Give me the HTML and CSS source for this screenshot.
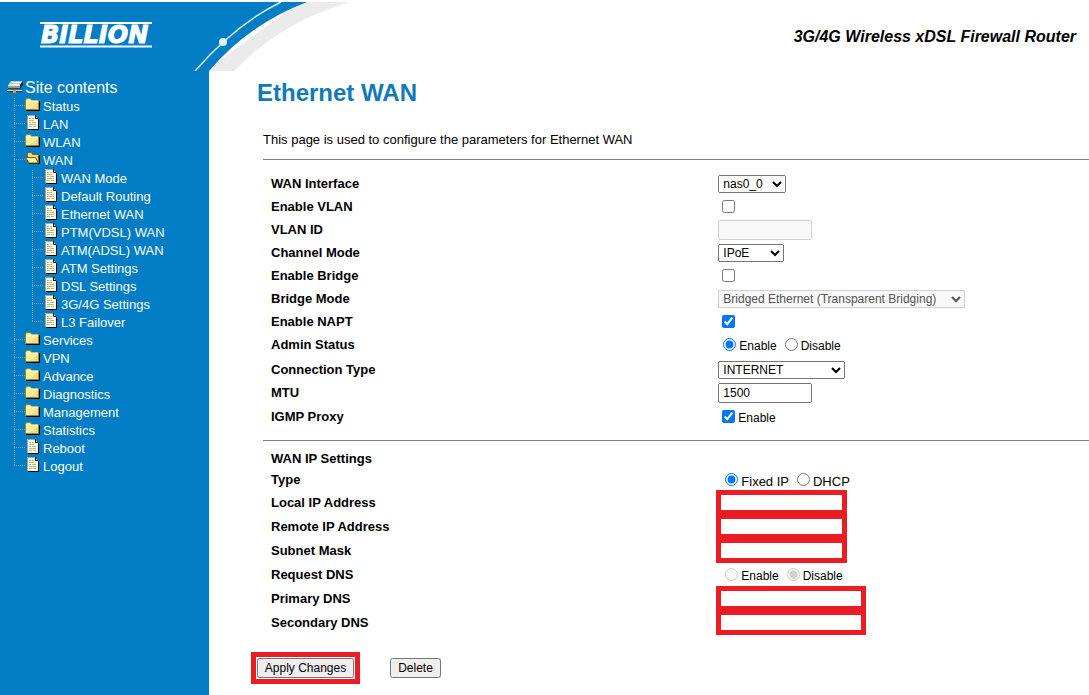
FILE: index.html
```html
<!DOCTYPE html>
<html lang="en">
<head>
  <meta charset="UTF-8">
  <meta name="viewport" content="width=device-width, initial-scale=1.0">
  <title>3G/4G Wireless xDSL Firewall Router</title>
  <link rel="stylesheet" href="styles.css">
</head>
<body>
  <!-- icon sprites -->
  <svg width="0" height="0" class="sprites" aria-hidden="true">
    <symbol id="icon-root" viewBox="0 0 18 18">
      <path d="M4 3h12l-3 4H1z" fill="#c8c8c8"/>
      <path d="M5 4.500h9M3 6.500h9" stroke="#f4f4f4"/>
      <path d="M1 7h12v4H1z" fill="#9a9a9a"/>
      <path d="M1 7.500h12" stroke="#e8e8e8"/>
      <path d="M13 7l3-4v4l-3 4z" fill="#222"/>
      <path d="M1 10.500h12" stroke="#444"/>
      <path d="M2 9h3" stroke="#5c5"/>
      <path d="M0 12.500h15" stroke="#ddd"/>
      <path d="M0 13.500h15" stroke="#333"/>
      <path d="M6 12h3v3H6z" fill="#f90"/>
    </symbol>
    <symbol id="icon-folder" viewBox="1 1 18 18">
      <path d="M2 13h13V5h1v10H2z" fill="#000"/>
      <path d="M1.500 4.500l1-2h4l1 2h7v9h-13z" fill="#fbee9c" stroke="#8f8a30"/>
      <path d="M2 5h12" stroke="#fffbd0"/>
      <path d="M6 13h8V6z" fill="#f5d98c"/>
    </symbol>
    <symbol id="icon-folder-open" viewBox="1 1 18 18">
      <path d="M3.500 3.500l1-1h3l1 2h6v9h-11z" fill="#f3d97c" stroke="#6b6420"/>
      <path d="M15 5h1v9H5v-1h10z" fill="#000"/>
      <path d="M1.500 7.500h10l3 5.500H5z" fill="#fff3a0" stroke="#6b6420"/>
    </symbol>
    <symbol id="icon-page" viewBox="0 1 18 18">
      <path d="M3 15h10V5h1v11H3z" fill="#000"/>
      <path d="M2 1h8l3 4v10H2z" fill="#fffde0"/>
      <path d="M2.500 15V1.500H10" fill="none" stroke="#a8a890"/>
      <path d="M10.500 1v3.500H13" fill="none" stroke="#000"/>
      <path d="M4 4.500h2M7 4.500h2M4 6.500h5M4 8.500h2M7 8.500h4M4 10.500h7M4 12.500h3M8 12.500h3" stroke="#b9b99c"/>
    </symbol>
  </svg>

  <header class="header">
    <svg class="banner" width="350" height="69" viewBox="0 0 350 69" role="img" aria-label="Billion">
      <path d="M300 0H350Q281 20 234 69H205z" fill="#ebebeb"/>
      <path d="M0 0H307Q249 22 209 69H0z" fill="#007dc5"/>
      <path d="M281 0Q236 22 195 69" fill="none" stroke="#d8f1fb" stroke-width="1.500"/>
      <circle cx="223" cy="40" r="4" fill="#e4f4fb"/>
      <path d="M40 21h112M40 44.500h112" stroke="#fff" stroke-width="2"/>
      <text x="41" y="41" class="logo-text">BILLION</text>
    </svg>
    <div class="product">3G/4G Wireless xDSL Firewall Router</div>
  </header>

  <div class="wrapper">
    <nav class="sidebar">
      <div class="root"><svg class="icon"><use href="#icon-root"/></svg>Site contents</div>
      <ul class="tree">
        <li><a href="#"><svg class="icon"><use href="#icon-folder"/></svg>Status</a></li>
        <li><a href="#"><svg class="icon"><use href="#icon-page"/></svg>LAN</a></li>
        <li><a href="#"><svg class="icon"><use href="#icon-folder"/></svg>WLAN</a></li>
        <li><a href="#"><svg class="icon"><use href="#icon-folder-open"/></svg>WAN</a>
          <ul class="tree">
            <li><a href="#"><svg class="icon"><use href="#icon-page"/></svg>WAN Mode</a></li>
            <li><a href="#"><svg class="icon"><use href="#icon-page"/></svg>Default Routing</a></li>
            <li><a href="#"><svg class="icon"><use href="#icon-page"/></svg>Ethernet WAN</a></li>
            <li><a href="#"><svg class="icon"><use href="#icon-page"/></svg>PTM(VDSL) WAN</a></li>
            <li><a href="#"><svg class="icon"><use href="#icon-page"/></svg>ATM(ADSL) WAN</a></li>
            <li><a href="#"><svg class="icon"><use href="#icon-page"/></svg>ATM Settings</a></li>
            <li><a href="#"><svg class="icon"><use href="#icon-page"/></svg>DSL Settings</a></li>
            <li><a href="#"><svg class="icon"><use href="#icon-page"/></svg>3G/4G Settings</a></li>
            <li><a href="#"><svg class="icon"><use href="#icon-page"/></svg>L3 Failover</a></li>
          </ul>
        </li>
        <li><a href="#"><svg class="icon"><use href="#icon-folder"/></svg>Services</a></li>
        <li><a href="#"><svg class="icon"><use href="#icon-folder"/></svg>VPN</a></li>
        <li><a href="#"><svg class="icon"><use href="#icon-folder"/></svg>Advance</a></li>
        <li><a href="#"><svg class="icon"><use href="#icon-folder"/></svg>Diagnostics</a></li>
        <li><a href="#"><svg class="icon"><use href="#icon-folder"/></svg>Management</a></li>
        <li><a href="#"><svg class="icon"><use href="#icon-folder"/></svg>Statistics</a></li>
        <li><a href="#"><svg class="icon"><use href="#icon-page"/></svg>Reboot</a></li>
        <li><a href="#"><svg class="icon"><use href="#icon-page"/></svg>Logout</a></li>
      </ul>
    </nav>

    <main class="main">
      <h1>Ethernet WAN</h1>
      <form>
        <p class="intro">This page is used to configure the parameters for Ethernet WAN</p>

        <div class="section">
          <div class="row">
            <label class="name" for="wanif">WAN Interface</label>
            <div class="field"><select id="wanif" class="w-if"><option>nas0_0</option></select></div>
          </div>
          <div class="row">
            <label class="name" for="vlan">Enable VLAN</label>
            <div class="field"><input type="checkbox" id="vlan"></div>
          </div>
          <div class="row">
            <label class="name" for="vid">VLAN ID</label>
            <div class="field"><input type="text" id="vid" disabled></div>
          </div>
          <div class="row">
            <label class="name" for="mode">Channel Mode</label>
            <div class="field"><select id="mode" class="w-mode"><option>IPoE</option></select></div>
          </div>
          <div class="row">
            <label class="name" for="bridge">Enable Bridge</label>
            <div class="field"><input type="checkbox" id="bridge"></div>
          </div>
          <div class="row">
            <label class="name" for="brmode">Bridge Mode</label>
            <div class="field"><select id="brmode" class="w-bridge" disabled><option>Bridged Ethernet (Transparent Bridging)</option></select></div>
          </div>
          <div class="row">
            <label class="name" for="napt">Enable NAPT</label>
            <div class="field"><input type="checkbox" id="napt" checked></div>
          </div>
          <div class="row row-tall">
            <span class="name">Admin Status</span>
            <div class="field">
              <input type="radio" name="admin" id="admin-on" checked><label for="admin-on">Enable</label>
              <input type="radio" name="admin" id="admin-off"><label for="admin-off">Disable</label>
            </div>
          </div>
          <div class="row">
            <label class="name" for="ctype">Connection Type</label>
            <div class="field"><select id="ctype" class="w-ctype"><option>INTERNET</option></select></div>
          </div>
          <div class="row">
            <label class="name" for="mtu">MTU</label>
            <div class="field"><input type="text" id="mtu" value="1500"></div>
          </div>
          <div class="row row-last">
            <span class="name">IGMP Proxy</span>
            <div class="field"><input type="checkbox" id="igmp" checked><label for="igmp">Enable</label></div>
          </div>
        </div>

        <div class="section section-ip">
          <div class="row"><span class="name">WAN IP Settings</span></div>
          <div class="row">
            <span class="name">Type</span>
            <div class="field indent ip-type">
              <input type="radio" name="iptype" id="fixed" checked><label for="fixed">Fixed IP</label>
              <input type="radio" name="iptype" id="dhcp"><label for="dhcp">DHCP</label>
            </div>
          </div>
          <div class="row">
            <label class="name" for="ip">Local IP Address</label>
            <div class="field"><input type="text" id="ip" class="marked"></div>
          </div>
          <div class="row">
            <label class="name" for="remote">Remote IP Address</label>
            <div class="field"><input type="text" id="remote" class="marked"></div>
          </div>
          <div class="row">
            <label class="name" for="mask">Subnet Mask</label>
            <div class="field"><input type="text" id="mask" class="marked"></div>
          </div>
          <div class="row">
            <span class="name">Request DNS</span>
            <div class="field indent">
              <input type="radio" name="dns" id="dns-on" disabled><label for="dns-on">Enable</label>
              <input type="radio" name="dns" id="dns-off" disabled checked><label for="dns-off">Disable</label>
            </div>
          </div>
          <div class="row">
            <label class="name" for="dns1">Primary DNS</label>
            <div class="field"><input type="text" id="dns1" class="marked marked-wide"></div>
          </div>
          <div class="row">
            <label class="name" for="dns2">Secondary DNS</label>
            <div class="field"><input type="text" id="dns2" class="marked marked-wide"></div>
          </div>
        </div>

        <div class="buttons">
          <span class="mark"><button type="button" class="btn-apply">Apply Changes</button></span>
          <button type="button" class="btn-delete">Delete</button>
        </div>
      </form>
    </main>
  </div>
</body>
</html>
```
FILE: styles.css
```css
* {
  margin: 0;
  padding: 0;
  box-sizing: border-box;
}
body {
  display: flex;
  flex-direction: column;
  min-height: 100vh;
  padding-top: 2px;
  background: #fff;
  color: #000;
  font-family: Arial, "Liberation Sans", sans-serif;
  font-size: 13px;
}
.sprites {
  position: absolute;
}

/* header */
.header {
  display: flex;
  justify-content: space-between;
  align-items: center;
  padding-right: 13px;
}
.banner {
  display: block;
}
.logo-text {
  font: italic bold 24px "DejaVu Sans", sans-serif;
  fill: #fff;
  stroke: #fff;
  stroke-width: 1px;
}
.product {
  font-size: 16px;
  font-weight: bold;
  font-style: italic;
}

.wrapper {
  display: flex;
  flex: 1;
}

/* sidebar tree */
.sidebar {
  width: 209px;
  flex-shrink: 0;
  padding: 8px 0 0 7px;
  background: #007dc5;
  color: #fff;
}
.root {
  display: flex;
  height: 19px;
  line-height: 18px;
  font-size: 16px;
}
.icon {
  width: 18px;
  height: 18px;
  margin-top: -1px;
  flex-shrink: 0;
}
.tree {
  list-style: none;
  padding-left: 7px;
}
.tree li {
  padding-left: 11px;
  background-image:
    repeating-linear-gradient(to bottom, #7d9fb5 0 1px, transparent 1px 2px),
    repeating-linear-gradient(to right, #7d9fb5 0 1px, transparent 1px 2px);
  background-repeat: no-repeat;
  background-size: 1px 100%, 11px 1px;
  background-position: 0 0, 0 7px;
}
.tree li:last-child {
  background-size: 1px 8px, 11px 1px;
}
.tree a {
  display: flex;
  height: 18px;
  line-height: 18px;
  color: #fff;
  text-decoration: none;
}

/* content */
.main {
  flex: 1;
  padding: 8px 0 12px 42px;
}
h1 {
  margin-left: 6px;
  font-size: 24px;
  line-height: 28px;
  color: #0f7abb;
}
.intro {
  margin: 24px 0 0 12px;
  line-height: 18px;
}
.section {
  margin: 10px 0 0 12px;
  padding: 12px 0;
  border-top: 1px solid #808080;
}
.section-ip {
  margin-top: 0;
  padding-top: 7px;
}
.row {
  display: flex;
  align-items: center;
  height: 23px;
}
.row-tall {
  height: 25px;
  padding-bottom: 3px;
}
.row-last {
  height: 24px;
}
.section-ip .row {
  height: 24px;
}
.section-ip .row:nth-child(-n+2) {
  height: 21px;
}
.name {
  width: 55%;
  padding-left: 8px;
  font-weight: bold;
}
.field {
  display: flex;
  align-items: center;
  padding-left: 1px;
  font-size: 12px;
}
.indent {
  padding-left: 3px;
}
.ip-type {
  font-size: 13px;
}
.field label {
  padding-top: 4px;
  margin-right: 8px;
}
input[type="checkbox"] {
  width: 13px;
  height: 13px;
  margin: 0 3px 0 4px;
}
input[type="radio"] {
  width: 13px;
  height: 13px;
  margin: 0 3px 0 5px;
}
label + input[type="radio"] {
  margin-left: 0;
}
select,
input[type="text"],
button {
  font-family: inherit;
  font-size: 12px;
}
select {
  height: 18px;
}
select:disabled {
  opacity: 1;
  color: #545454;
  border-color: #d0d0d0;
  background-color: #f8f8f8;
}
input[type="text"] {
  width: 94px;
  height: 20px;
  padding: 1px 3px;
}
.w-if {
  width: 68px;
}
.w-mode {
  width: 66px;
}
.w-bridge {
  width: 247px;
}
.w-ctype {
  width: 127px;
}
.field .marked {
  width: 131px;
  height: 25px;
  margin-left: -2px;
  border: 5px solid #ec1c24;
}
.field .marked-wide {
  width: 150px;
}

/* buttons */
.buttons {
  display: flex;
  align-items: center;
  gap: 30px;
  margin-top: 6px;
}
.mark {
  display: flex;
  padding: 1px;
  border: 5px solid #ec1c24;
}
button {
  height: 20px;
}
.btn-apply {
  width: 97px;
}
.btn-delete {
  width: 51px;
}
```
